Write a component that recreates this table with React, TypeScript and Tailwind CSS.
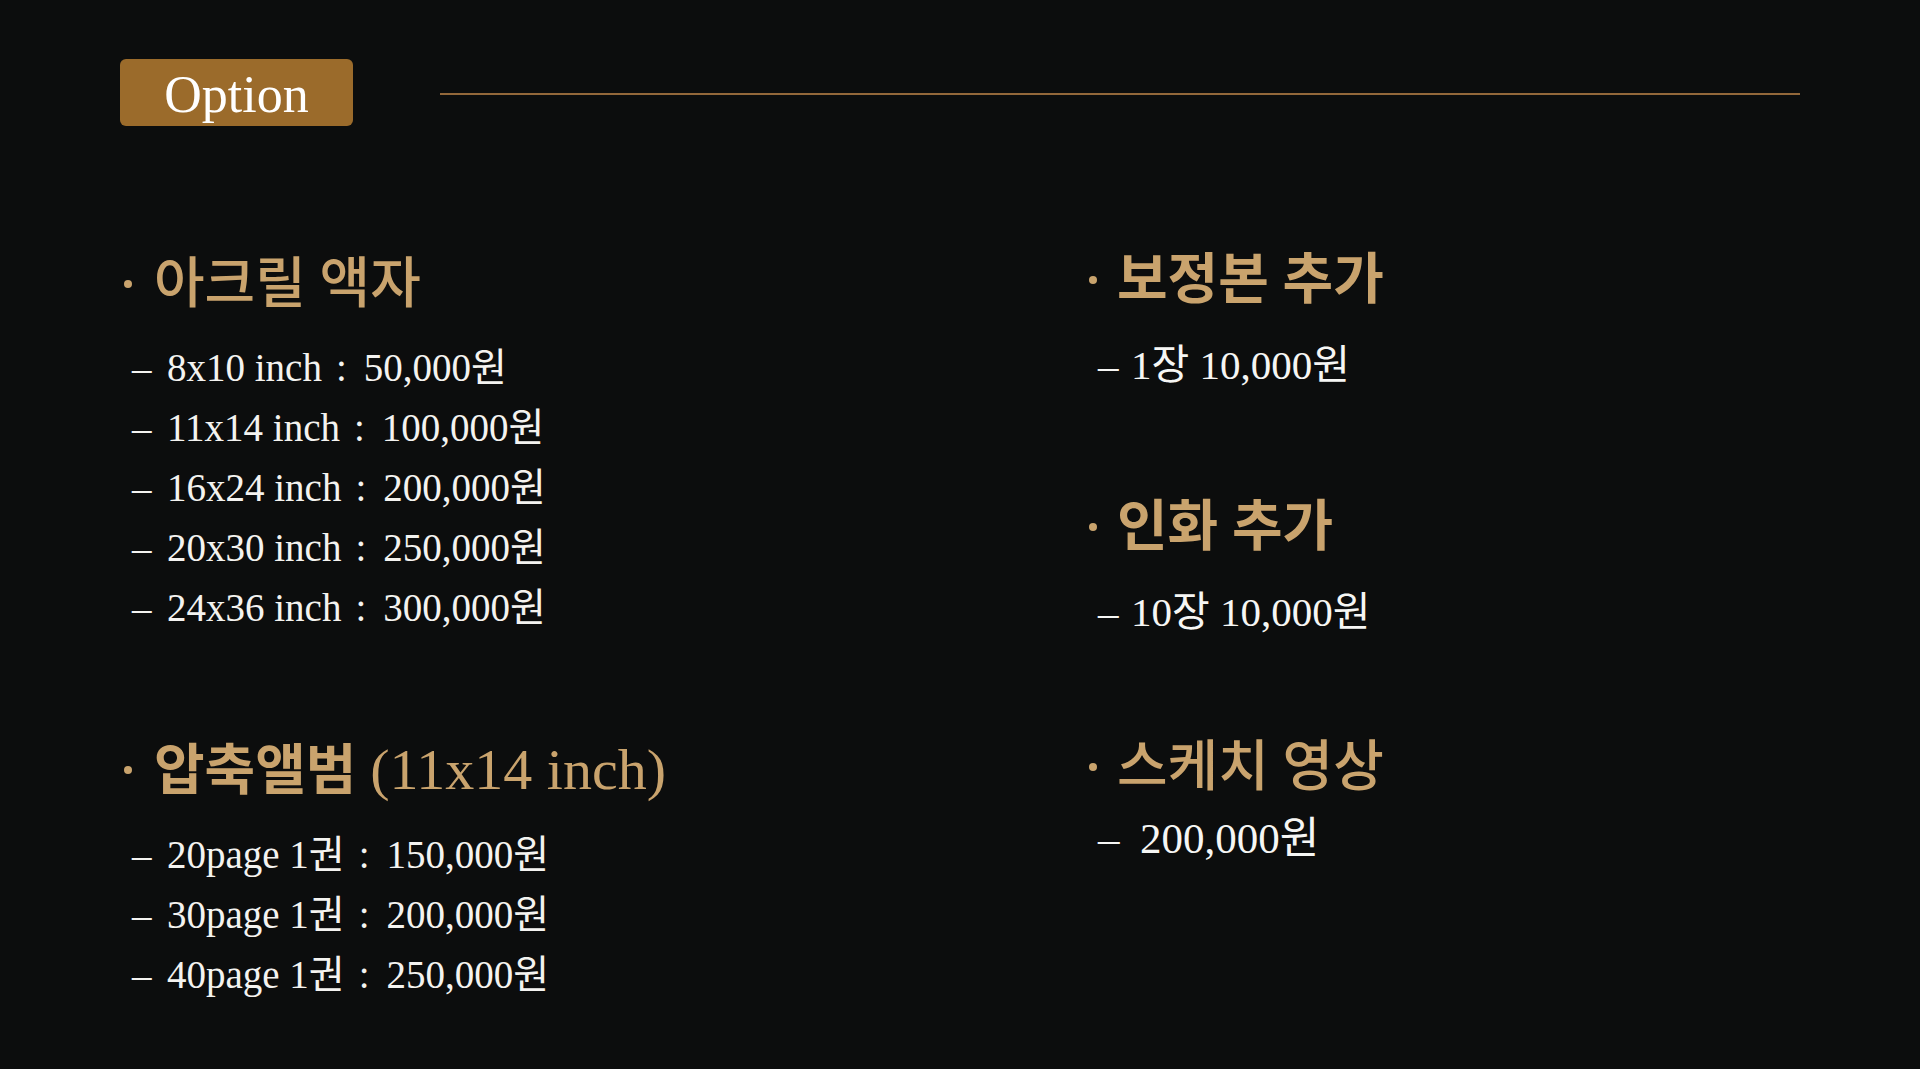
import React from 'react';

type Item = { label: string; price?: string };

const acrylic: Item[] = [
  { label: '8x10 inch', price: '50,000원' },
  { label: '11x14 inch', price: '100,000원' },
  { label: '16x24 inch', price: '200,000원' },
  { label: '20x30 inch', price: '250,000원' },
  { label: '24x36 inch', price: '300,000원' },
];

const album: Item[] = [
  { label: '20page 1권', price: '150,000원' },
  { label: '30page 1권', price: '200,000원' },
  { label: '40page 1권', price: '250,000원' },
];

const Heading: React.FC<{ children: React.ReactNode; bold?: boolean; right?: boolean }> = ({
  children,
  bold,
  right,
}) => (
  <div className="flex items-center h-[60px]">
    <span className="ml-[4px] w-[8px] h-[8px] rounded-full bg-[#c9a36d] shrink-0" />
    <h2
      className={`${right ? 'ml-[20px]' : 'ml-[22px]'} text-[55px] leading-[60px] text-[#c9a36d] whitespace-nowrap ${
        bold ? 'font-bold' : 'font-medium'
      }`}
    >
      {children}
    </h2>
  </div>
);

const PriceRow: React.FC<{ item: Item }> = ({ item }) => (
  <li className="flex items-center pl-[12px] h-[60px] text-[39px] leading-[60px] text-[#f4f3f0] whitespace-nowrap">
    <span className="inline-block w-[35px]">–</span>
    <span>{item.label}</span>
    <span className="pl-[14px] pr-[17px]">:</span>
    <span>{item.price}</span>
  </li>
);

const ExtraRow: React.FC<{ children: React.ReactNode; dash?: string; size?: string }> = ({
  children,
  dash = 'w-[33px]',
  size = 'text-[41px]',
}) => (
  <div className={`flex items-center pl-[13px] h-[60px] ${size} leading-[60px] text-[#f6f6f4] whitespace-nowrap`}>
    <span className={`inline-block ${dash}`}>–</span>
    <span>{children}</span>
  </div>
);

export default function App() {
  return (
    <div className="w-full h-[1069px] overflow-hidden bg-[#0c0d0d] font-['Liberation_Serif','Noto_Sans_CJK_KR',serif] px-[120px]">
      {/* Header */}
      <div className="flex items-center pt-[59px]">
        <div className="w-[233px] h-[67px] rounded-[6px] bg-[#9b6b2b] flex items-center justify-center pt-[4px]">
          <span className="text-[52px] leading-none text-white">Option</span>
        </div>
        <div className="flex-1 h-[2px] mt-[2px] ml-[87px] bg-[#93683a]" />
      </div>

      {/* Columns */}
      <div className="grid grid-cols-[965px_1fr] mt-[124px]">
        {/* Left */}
        <div className="flex flex-col pt-[4px]">
          <Heading>아크릴 액자</Heading>
          <ul className="mt-[24px] flex flex-col">
            {acrylic.map((it) => (
              <PriceRow key={it.label} item={it} />
            ))}
          </ul>

          <div className="mt-[102px]">
            <Heading bold>
              압축앨범 <span className="text-[58px] font-normal">(11x14 inch)</span>
            </Heading>
          </div>
          <ul className="mt-[25px] flex flex-col">
            {album.map((it) => (
              <PriceRow key={it.label} item={it} />
            ))}
          </ul>
        </div>

        {/* Right */}
        <div className="flex flex-col">
          <Heading bold right>
            보정본 추가
          </Heading>
          <div className="mt-[25px]">
            <ExtraRow>1장 10,000원</ExtraRow>
          </div>

          <div className="mt-[102px]">
            <Heading bold right>
              인화 추가
            </Heading>
          </div>
          <div className="mt-[25px]">
            <ExtraRow>10장 10,000원</ExtraRow>
          </div>

          <div className="mt-[95px]">
            <Heading right>스케치 영상</Heading>
          </div>
          <div className="mt-[12px]">
            <ExtraRow dash="w-[42px]" size="text-[43px]">
              200,000원
            </ExtraRow>
          </div>
        </div>
      </div>
    </div>
  );
}
